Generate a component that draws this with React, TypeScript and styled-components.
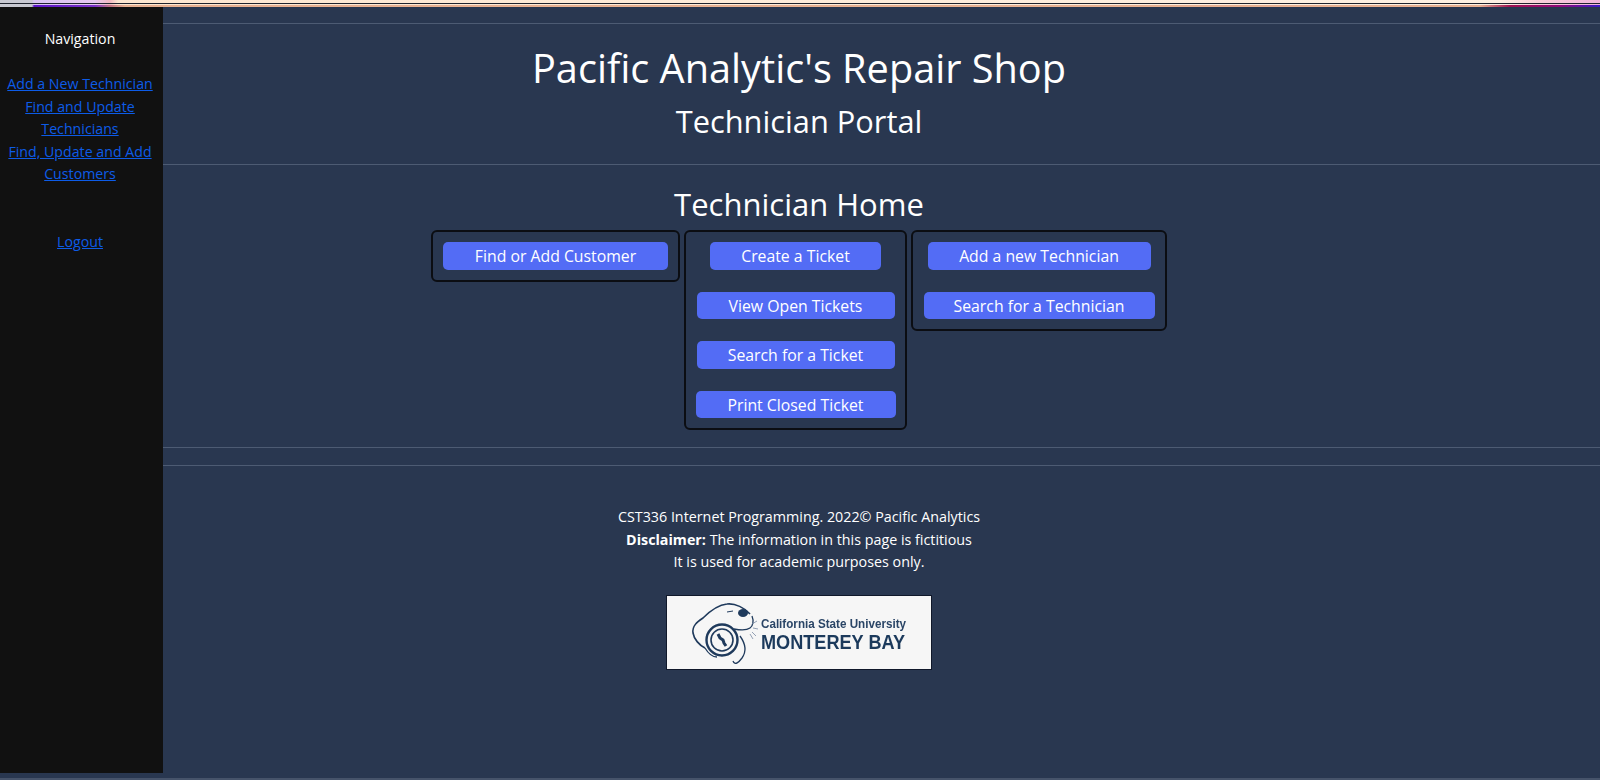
import React from 'react'
import styled, { createGlobalStyle } from 'styled-components'

const GlobalStyle = createGlobalStyle`
  html, body {
    margin: 0;
    padding: 0;
    background: #293750;
  }
  body {
    font-family: "Open Sans", "Liberation Sans", sans-serif;
    color: #fff;
    font-size: 15px;
    line-height: 22.5px;
    overflow: hidden;
  }
`

const Page = styled.div`
  width: 1600px;
  height: 780px;
  display: flex;
  flex-direction: column;
  overflow: hidden;
`

const BrowserEdge = styled.div`
  flex: none;
  height: 7px;
  display: flex;
  flex-direction: column;
  background: #111;
`

const EdgeLight = styled.div<{ $height: number }>`
  height: ${(p) => p.$height}px;
  background: linear-gradient(90deg, #c9c9d2 0, #c9c9d2 32px, #d9c4f2 34px, #e6c8f0 95px, #f2b8c0 110px, #fde6d0 118px, #fdf0e2 1500px, #f8cfd8 1540px, #f3b4dc 1600px);
`

const EdgeDark = styled.div`
  height: 1px;
  background: #20242e;
`

const EdgeColor = styled.div`
  height: 2px;
  background: linear-gradient(90deg, #c8c8d0 0, #c8c8d0 32px, #5b12c8 34px, #7a30c8 95px, #c07080 110px, #e8b090 125px, #e8b090 1480px, #a01050 1510px, #90087a 1560px, #3818c8 1600px);
`

const Shell = styled.div`
  flex: 1;
  display: grid;
  grid-template-columns: 163px 1fr;
  align-items: start;
`

const SideNav = styled.nav`
  height: 766px;
  box-sizing: border-box;
  background: #111;
  padding: 21px 3px 0 0;
  text-align: center;
  font-size: 14.2px;
`

const NavTitle = styled.div`
  height: 45px;
  color: #fff;
`

const NavLink = styled.a<{ $gap?: number }>`
  color: #0d5ce8;
  text-decoration: underline;
  display: block;
  margin-top: ${(p) => p.$gap || 0}px;
`

const Main = styled.main`
  padding-right: 165px;
  text-align: center;
`

const Rule = styled.hr<{ $top: number }>`
  border: 0;
  height: 1px;
  margin: 0;
  background: #4d5b73;
  margin-right: -165px;
  margin-top: ${(p) => p.$top}px;
`

const Title = styled.h1`
  margin: 0;
  padding-top: 16px;
  font-size: 39.7px;
  font-weight: 400;
  line-height: 56px;
`

const SubTitle = styled.h2`
  margin: 0;
  padding-top: 5px;
  font-size: 30.8px;
  font-weight: 400;
  line-height: 40px;
`

const HomeTitle = styled.h2`
  margin: 0;
  padding-top: 19px;
  font-size: 31px;
  font-weight: 400;
  line-height: 40px;
`

const BoxRow = styled.div`
  display: flex;
  justify-content: center;
  align-items: flex-start;
  gap: 4px;
  margin-top: 6px;
`

const Box = styled.div<{ $width: number }>`
  width: ${(p) => p.$width}px;
  box-sizing: border-box;
  border: 2px solid #0b0d12;
  border-radius: 6px;
  padding: 10px 0;
  display: flex;
  flex-direction: column;
  align-items: center;
  gap: 22px;
`

const ActionButton = styled.button<{ $width: number }>`
  width: ${(p) => p.$width}px;
  height: 27.5px;
  padding: 1px 0 0;
  border: 0;
  border-radius: 5px;
  background: #536cf5;
  color: #fff;
  font: inherit;
  font-size: 15.8px;
  line-height: 26px;
  white-space: nowrap;
`

const Footer = styled.footer`
  padding-top: 40px;
  font-size: 14.3px;
  line-height: 22.5px;
`

const LogoCard = styled.div`
  width: 266px;
  height: 75px;
  box-sizing: border-box;
  margin: 21px auto 0;
  background: #f6f6f6;
  border: 1px solid #10182a;
  display: flex;
  align-items: center;
`

const LogoArt = styled.svg`
  display: block;
  filter: blur(0.5px);
`

const BottomRule = styled.div`
  flex: none;
  height: 2px;
  margin-top: -3px;
  background: #46536a;
`

const Logo = () => (
  <LogoCard>
    <LogoArt width="264" height="73" viewBox="0 0 264 73">
      <g fill="none" stroke="#1f3a5c" transform="translate(0 -1)">
        <path d="M83 19C78 13 68 8 60 9 50 10 42 17 36 23 30 27 25 31 26 38 27 44 32 50 38 53" strokeWidth="1.6" />
        <path d="M85 21C87 26 86 31 83 33 79 36 72 35 67 34" strokeWidth="1.3" />
        <path d="M73 41C78 48 80 56 75 63 72 67 68 71 66 66" strokeWidth="1.3" />
        <path d="M38 53C41 58 45 62 50 62" strokeWidth="1.3" />
        <circle cx="55" cy="45" r="15.5" strokeWidth="2.4" />
        <circle cx="55" cy="45" r="11" strokeWidth="1.6" />
        <path d="M51 39l2 4 3 2 1 3 2 3" strokeWidth="3" />
        <path d="M60 17l6-1" strokeWidth="1" />
        <path d="M85 29l5-3M86 33l5 1M85 37l4 4M83 39l3 5" strokeWidth="0.8" stroke="#7b8ca3" />
        <ellipse cx="76" cy="18" rx="5" ry="4" fill="#1f3a5c" stroke="none" />
      </g>
      <text x="94" y="32" fill="#2a4566" fontFamily="Liberation Sans, sans-serif" fontSize="12.8" fontWeight="700" textLength="145" lengthAdjust="spacingAndGlyphs">California State University</text>
      <text x="94" y="53" fill="#1c3a5c" fontFamily="Liberation Sans, sans-serif" fontSize="20" fontWeight="700" textLength="144" lengthAdjust="spacingAndGlyphs">MONTEREY BAY</text>
    </LogoArt>
  </LogoCard>
)

export default function App() {
  return (
    <Page>
      <GlobalStyle />
      <BrowserEdge>
        <EdgeLight $height={3} />
        <EdgeDark />
        <EdgeLight $height={1} />
        <EdgeColor />
      </BrowserEdge>
      <Shell>
        <SideNav>
          <NavTitle>Navigation</NavTitle>
          <NavLink href="#">Add a New Technician</NavLink>
          <NavLink href="#">Find and Update Technicians</NavLink>
          <NavLink href="#">Find, Update and Add Customers</NavLink>
          <NavLink href="#" $gap={45}>Logout</NavLink>
        </SideNav>
        <Main>
          <Rule $top={16} />
          <Title>Pacific Analytic's Repair Shop</Title>
          <SubTitle>Technician Portal</SubTitle>
          <Rule $top={23} />
          <HomeTitle>Technician Home</HomeTitle>
          <BoxRow>
            <Box $width={249}>
              <ActionButton $width={225}>Find or Add Customer</ActionButton>
            </Box>
            <Box $width={223}>
              <ActionButton $width={171}>Create a Ticket</ActionButton>
              <ActionButton $width={198}>View Open Tickets</ActionButton>
              <ActionButton $width={198}>Search for a Ticket</ActionButton>
              <ActionButton $width={200}>Print Closed Ticket</ActionButton>
            </Box>
            <Box $width={256}>
              <ActionButton $width={223}>Add a new Technician</ActionButton>
              <ActionButton $width={231}>Search for a Technician</ActionButton>
            </Box>
          </BoxRow>
          <Rule $top={17} />
          <Rule $top={17} />
          <Footer>
            CST336 Internet Programming. 2022© Pacific Analytics
            <br />
            <strong>Disclaimer:</strong> The information in this page is fictitious
            <br />
            It is used for academic purposes only.
            <Logo />
          </Footer>
        </Main>
      </Shell>
      <BottomRule />
    </Page>
  )
}
